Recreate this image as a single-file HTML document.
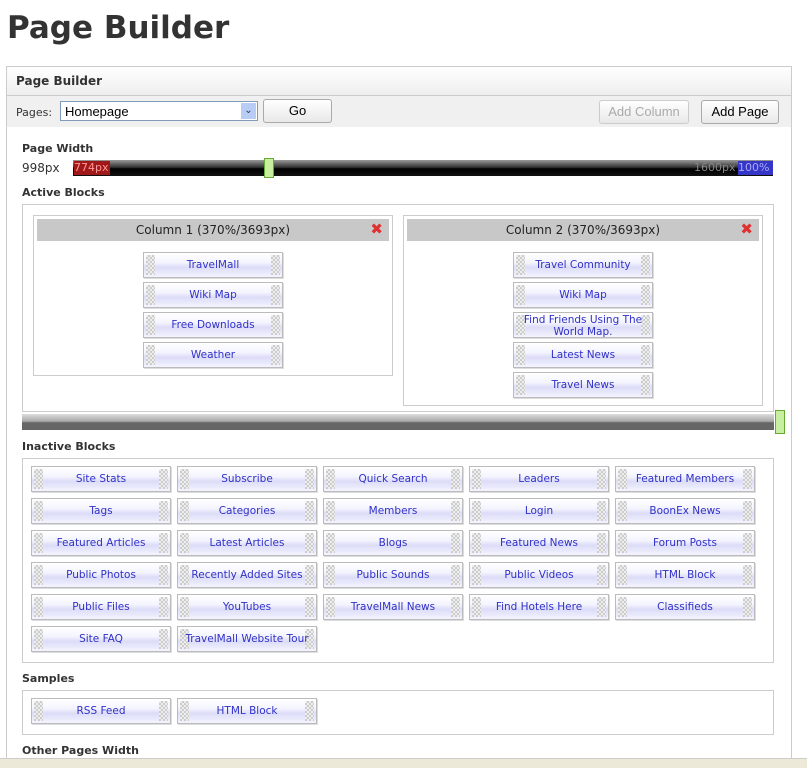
<!DOCTYPE html><html><head><style>
body{margin:0;width:807px;height:767px;overflow:hidden;background:#fff;font-family:"DejaVu Sans","Liberation Sans",sans-serif;position:relative}
.a{position:absolute}
h1{position:absolute;left:7px;top:10px;margin:0;font:bold 31px "DejaVu Sans",sans-serif;color:#333;letter-spacing:0}
.lbl{position:absolute;font-weight:bold;font-size:11px;color:#333}
.box{position:absolute;border:1px solid #ccc;background:#fff}
.b{position:absolute;width:138px;height:24px;border:1px solid #bbb;background:linear-gradient(#fff 0%,#f4f4ff 40%,#dcdcf8 60%,#f4f4ff 100%);font-size:10.5px;color:#3030c8;text-align:center;line-height:24px;white-space:nowrap;box-shadow:1px 1px 0 #ddd}
.b span{position:relative;z-index:2}
.b:before,.b:after{content:"";position:absolute;top:2px;bottom:2px;width:9px;background:repeating-conic-gradient(#ccc 0 25%,#eee 0 50%) 0 0/4px 4px}
.b:before{left:2px}.b:after{right:2px}
.btn{position:absolute;height:22px;border:1px solid #aaa;border-radius:3px;background:linear-gradient(#fff,#e8e8e8);font:13px "Liberation Sans",sans-serif;text-align:center;line-height:22px}
.ch{position:absolute;height:22px;background:#c8c8c8;font-size:12px;color:#222;text-align:center;line-height:22px}
.x{position:absolute;right:6px;top:3px;color:#e03030;font-weight:bold;font-size:15px;line-height:15px}
</style></head><body>
<h1>Page Builder</h1>
<div class="a" style="left:6px;top:66px;width:784px;height:701px;border:1px solid #ccc;border-bottom:none"></div>
<div class="a" style="left:7px;top:67px;width:784px;height:28px;background:linear-gradient(#fff,#eee);border-bottom:1px solid #ccc"></div>
<div class="lbl" style="left:16px;top:74px;font-size:12px">Page Builder</div>
<div class="a" style="left:7px;top:96px;width:784px;height:31px;background:#f0f0f0"></div>
<div class="a" style="left:16px;top:106px;font-size:11px;color:#333">Pages:</div>
<div class="a" style="left:60px;top:101px;height:20px;border:1px solid #7f9db9;background:#fff;font:13px 'Liberation Sans',sans-serif;line-height:20px;padding-left:4px;box-sizing:border-box;width:198px">Homepage</div>
<div class="a" style="left:241px;top:103px;width:15px;height:16px;background:#b8cdf6;color:#335;font-size:10px;text-align:center;line-height:16px">&#8964;</div>
<div class="btn" style="left:263px;top:99px;width:67px">Go</div>
<div class="btn" style="left:599px;top:100px;width:88px;color:#aaa;border-color:#ccc">Add Column</div>
<div class="btn" style="left:701px;top:100px;width:76px">Add Page</div>
<div class="lbl" style="left:22px;top:142px">Page Width</div>
<div class="a" style="left:22px;top:161px;font-size:12px;color:#333">998px</div>
<div class="a" style="left:73px;top:160px;width:700px;height:16px;background:linear-gradient(#999,#333 45%,#000 55%,#111)"></div>
<div class="a" style="left:74px;top:161px;width:36px;height:14px;background:#a01818;color:#f99;font-size:11px;line-height:14px">774px</div>
<div class="a" style="left:694px;top:161px;color:#888;font-size:11px;line-height:14px">1600px</div>
<div class="a" style="left:738px;top:161px;width:35px;height:14px;background:#3535c8;color:#aaf;font-size:11px;line-height:14px">100%</div>
<div class="a" style="left:264px;top:158px;width:8px;height:18px;background:#c8eea0;border:1px solid #6a3"></div>
<div class="lbl" style="left:22px;top:186px">Active Blocks</div>
<div class="box" style="left:22px;top:204px;width:750px;height:206px"></div>
<div class="box" style="left:33px;top:215px;width:358px;height:159px"></div>
<div class="ch" style="left:37px;top:219px;width:352px">Column 1 (370%/3693px)<span class="x">✖</span></div>
<div class="box" style="left:403px;top:215px;width:358px;height:189px"></div>
<div class="ch" style="left:407px;top:219px;width:352px">Column 2 (370%/3693px)<span class="x">✖</span></div>
<div class="b" style="left:143px;top:252px"><span>TravelMall</span></div>
<div class="b" style="left:143px;top:282px"><span>Wiki Map</span></div>
<div class="b" style="left:143px;top:312px"><span>Free Downloads</span></div>
<div class="b" style="left:143px;top:342px"><span>Weather</span></div>
<div class="b" style="left:513px;top:252px"><span>Travel Community</span></div>
<div class="b" style="left:513px;top:282px"><span>Wiki Map</span></div>
<div class="b" style="left:513px;top:312px;line-height:12px;white-space:normal;padding-top:1px;height:23px"><span>Find Friends Using The World Map.</span></div>
<div class="b" style="left:513px;top:342px"><span>Latest News</span></div>
<div class="b" style="left:513px;top:372px"><span>Travel News</span></div>
<div class="a" style="left:22px;top:414px;width:752px;height:16px;background:linear-gradient(#ddd,#aaa 45%,#666 55%,#666)"></div>
<div class="a" style="left:775px;top:410px;width:8px;height:22px;background:#c8eea0;border:1px solid #6a3"></div>
<div class="lbl" style="left:22px;top:440px">Inactive Blocks</div>
<div class="box" style="left:22px;top:458px;width:750px;height:203px"></div>
<div class="b" style="left:31px;top:466px"><span>Site Stats</span></div><div class="b" style="left:177px;top:466px"><span>Subscribe</span></div><div class="b" style="left:323px;top:466px"><span>Quick Search</span></div><div class="b" style="left:469px;top:466px"><span>Leaders</span></div><div class="b" style="left:615px;top:466px"><span>Featured Members</span></div>
<div class="b" style="left:31px;top:498px"><span>Tags</span></div><div class="b" style="left:177px;top:498px"><span>Categories</span></div><div class="b" style="left:323px;top:498px"><span>Members</span></div><div class="b" style="left:469px;top:498px"><span>Login</span></div><div class="b" style="left:615px;top:498px"><span>BoonEx News</span></div>
<div class="b" style="left:31px;top:530px"><span>Featured Articles</span></div><div class="b" style="left:177px;top:530px"><span>Latest Articles</span></div><div class="b" style="left:323px;top:530px"><span>Blogs</span></div><div class="b" style="left:469px;top:530px"><span>Featured News</span></div><div class="b" style="left:615px;top:530px"><span>Forum Posts</span></div>
<div class="b" style="left:31px;top:562px"><span>Public Photos</span></div><div class="b" style="left:177px;top:562px"><span>Recently Added Sites</span></div><div class="b" style="left:323px;top:562px"><span>Public Sounds</span></div><div class="b" style="left:469px;top:562px"><span>Public Videos</span></div><div class="b" style="left:615px;top:562px"><span>HTML Block</span></div>
<div class="b" style="left:31px;top:594px"><span>Public Files</span></div><div class="b" style="left:177px;top:594px"><span>YouTubes</span></div><div class="b" style="left:323px;top:594px"><span>TravelMall News</span></div><div class="b" style="left:469px;top:594px"><span>Find Hotels Here</span></div><div class="b" style="left:615px;top:594px"><span>Classifieds</span></div>
<div class="b" style="left:31px;top:626px"><span>Site FAQ</span></div><div class="b" style="left:177px;top:626px"><span>TravelMall Website Tour</span></div>
<div class="lbl" style="left:22px;top:672px">Samples</div>
<div class="box" style="left:22px;top:690px;width:750px;height:43px"></div>
<div class="b" style="left:31px;top:698px"><span>RSS Feed</span></div><div class="b" style="left:177px;top:698px"><span>HTML Block</span></div>
<div class="lbl" style="left:22px;top:744px">Other Pages Width</div>
<div class="a" style="left:0;top:758px;width:807px;height:9px;background:#ece9d8;border-top:1px solid #ccc"></div>
</body></html>
